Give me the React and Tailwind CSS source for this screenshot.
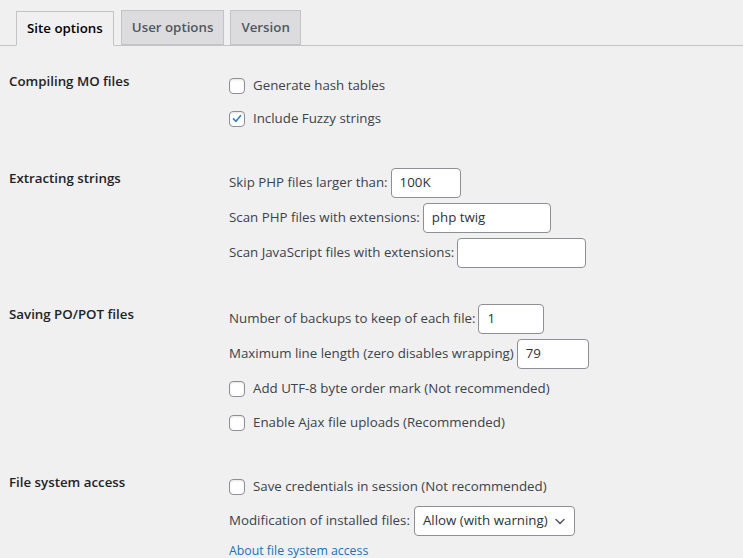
import React from 'react';

const font = { fontFamily: '"Open Sans", "Noto Sans", sans-serif' };

const Check = ({ checked }) => (
  <span className="inline-flex h-4 w-4 shrink-0 items-center justify-center rounded-[4px] border border-[#8c8f94] bg-white shadow-[inset_0_1px_2px_rgba(0,0,0,0.1)]">
    {checked && (
      <svg viewBox="0 0 20 20" className="h-[17px] w-[17px]">
        <path d="M5 10.5 L8.5 14 L15 6" fill="none" stroke="#3582c4" strokeWidth="2.4" strokeLinecap="round" strokeLinejoin="round" />
      </svg>
    )}
  </span>
);

const CheckRow = ({ label, checked, h = 'h-[33px]' }) => (
  <div className={`flex items-center gap-2 ${h}`}>
    <Check checked={checked} />
    <span>{label}</span>
  </div>
);

const InputRow = ({ label, value, width, h = 'h-[35px]' }) => (
  <div className={`flex items-center ${h}`}>
    <span className="mr-[3px]">{label}</span>
    <div className={`flex h-[30px] items-center rounded-[4px] border border-[#8c8f94] bg-white px-2 text-[#2c3338] ${width}`}>
      {value}
    </div>
  </div>
);

const Section = ({ title, thTop, children }) => (
  <div className="grid grid-cols-[220px_1fr]">
    <div className={`font-semibold leading-5 text-[#1d2327] ${thTop}`}>{title}</div>
    <div className="flex flex-col text-[#3c434a]">{children}</div>
  </div>
);

export default function App() {
  return (
    <div className="min-h-[558px] w-[743px] overflow-hidden bg-[#f0f0f1] text-[13.3px]" style={font}>
      {/* Tabs */}
      <div className="flex items-end border-b border-[#c3c4c7] pt-[10px] pl-[16px]">
        <div className="-mb-px border border-[#c3c4c7] border-b-[#f0f0f1] bg-[#f0f0f1] px-[10px] py-[5px] text-[13.3px] font-semibold leading-[23px] text-black">
          Site options
        </div>
        <div className="ml-[7px] border border-[#c3c4c7] bg-[#dcdcde] px-[10px] py-[5px] text-[13.3px] font-semibold leading-[23px] text-[#50575e]">
          User options
        </div>
        <div className="ml-[6px] border border-[#c3c4c7] bg-[#dcdcde] px-[10px] py-[5px] text-[13.3px] font-semibold leading-[23px] text-[#50575e]">
          Version
        </div>
      </div>

      <div className="pl-[9px]">
        <div className="pt-[23px]">
          <Section title="Compiling MO files" thTop="mt-[2px]">
            <CheckRow label="Generate hash tables" />
            <CheckRow label="Include Fuzzy strings" checked />
          </Section>
        </div>

        <div className="pt-[30px]">
          <Section title="Extracting strings" thTop="mt-[3px]">
            <InputRow label="Skip PHP files larger than:" value="100K" width="w-[70px]" />
            <InputRow label="Scan PHP files with extensions:" value="php twig" width="w-[128px]" />
            <InputRow label="Scan JavaScript files with extensions:" value="" width="w-[129px]" h="h-[36px]" />
          </Section>
        </div>

        <div className="pt-[30px]">
          <Section title="Saving PO/POT files" thTop="mt-[3px]">
            <InputRow label="Number of backups to keep of each file:" value="1" width="w-[66px]" />
            <InputRow label="Maximum line length (zero disables wrapping)" value="79" width="w-[72px]" />
            <CheckRow label="Add UTF-8 byte order mark (Not recommended)" h="h-[35px]" />
            <CheckRow label="Enable Ajax file uploads (Recommended)" h="h-[34px]" />
          </Section>
        </div>

        <div className="pt-[30px]">
          <Section title="File system access" thTop="mt-[2px]">
            <CheckRow label="Save credentials in session (Not recommended)" h="h-[34px]" />
            <div className="flex h-[34px] items-center">
              <span className="mr-[4px]">Modification of installed files:</span>
              <div className="flex h-[30px] w-[161px] items-center justify-between rounded-[4px] border border-[#8c8f94] bg-white pl-2 pr-[6px] text-[#2c3338]">
                <span>Allow (with warning)</span>
                <svg viewBox="0 0 20 20" className="h-4 w-4">
                  <path d="M5 8 L10 13 L15 8" fill="none" stroke="#50575e" strokeWidth="1.8" strokeLinecap="round" strokeLinejoin="round" />
                </svg>
              </div>
            </div>
            <div className="flex h-[26px] items-center">
              <a className="text-[12.3px] text-[#2271b1]">About file system access</a>
            </div>
          </Section>
        </div>
      </div>
    </div>
  );
}
